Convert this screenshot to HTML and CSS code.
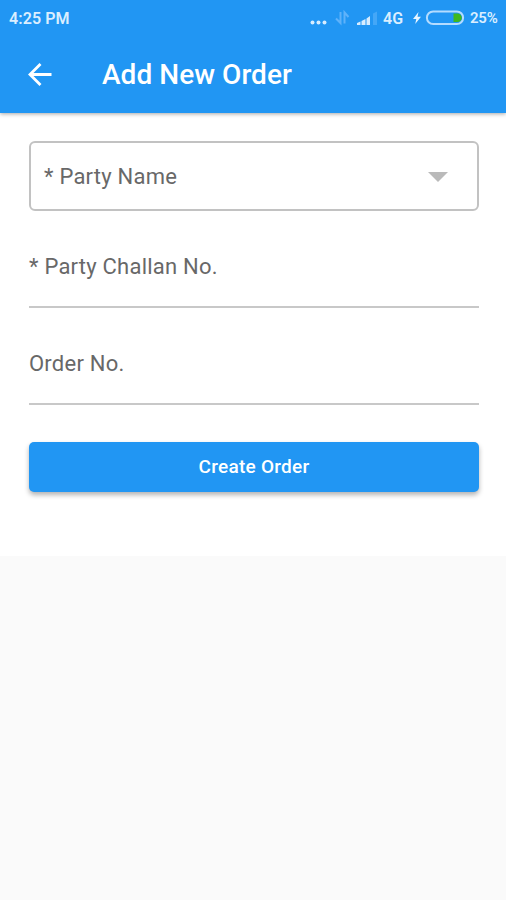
FILE: index.html
```html
<!DOCTYPE html>
<html lang="en">
<head>
<meta charset="utf-8">
<title>Add New Order</title>
<link rel="stylesheet" href="styles.css">
</head>
<body>
<header class="app-header">
  <div class="status-bar">
    <span class="clock">4:25 PM</span>
    <div class="status-icons">
      <svg class="network" width="68" height="20" viewBox="0 0 68 20">
        <g fill="#d6ecff"><circle cx="2.500" cy="14.600" r="2"/><circle cx="8.500" cy="14.600" r="2"/><circle cx="14.500" cy="14.600" r="2"/></g>
        <path d="M30.500 4V15L26 10.500M34.500 15.500V4.500L38.500 9" fill="none" stroke="#5fb2fa" stroke-width="2"/>
        <path d="M47 17V15L50.500 13.500V17ZM51.500 17V13L55.500 11V17ZM56.500 17V10.500L60 8V17Z" fill="#d6ecff"/>
        <path d="M63 17V5.500L67 3.500V17Z" fill="#44a7f7"/>
      </svg>
      <span class="carrier">4G</span>
      <svg class="battery" width="54" height="20" viewBox="0 0 54 20">
        <path d="M6.500 4L1 11H4.300L3.200 16L9 8.800H5.500Z" fill="#e8f5ff"/>
        <rect x="14.900" y="3.500" width="36.200" height="12.500" rx="6.250" fill="none" stroke="#b4dcff" stroke-width="2"/>
        <path d="M41.500 5.500H45.500A4.250 4.250 0 0 1 45.500 14H41.500Z" fill="#3fb81e"/>
      </svg>
      <span class="percent">25%</span>
    </div>
  </div>
  <div class="toolbar">
    <svg class="back" width="24" height="24" viewBox="0 0 24 24"><path d="M23.500 11.500H2M12.500 1L2 11.500L12.500 22" fill="none" stroke="#fff" stroke-width="2.800"/></svg>
    <h1 class="title">Add New Order</h1>
  </div>
</header>
<main class="form">
  <div class="select">
    <span class="label">* Party Name</span>
    <svg width="20" height="10" viewBox="0 0 20 10"><path d="M0 0H20L10 10Z" fill="#bababa"/></svg>
  </div>
  <div class="field"><span class="label">* Party Challan No.</span></div>
  <div class="field"><span class="label">Order No.</span></div>
  <button class="submit" type="button">Create Order</button>
</main>
</body>
</html>
```
FILE: styles.css
```css
* { box-sizing: border-box; }
body { margin: 0; min-height: 900px; background: #fafafa; font-family: Roboto, sans-serif; }
.app-header { position: relative; height: 113px; background: #2196f3; color: #fff; box-shadow: 0 1px 4px rgba(0,0,0,.35); }
.status-bar { display: flex; justify-content: space-between; align-items: center; height: 36px; padding: 0 8px 0 9px; color: #daeeff; font-size: 16px; font-weight: 600; }
.clock { letter-spacing: .1px; }
.status-icons { display: flex; align-items: center; }
.carrier { width: 21px; margin-left: 5px; }
.battery { margin-left: 8px; }
.percent { width: 28px; margin-left: 4px; font-size: 15px; letter-spacing: -.2px; }
.toolbar { display: flex; align-items: center; height: 77px; padding-left: 28px; }
.title { margin: 0 0 0 50px; font-size: 28px; font-weight: 500; line-height: 36px; letter-spacing: .05px; }
.form { height: 443px; padding: 28px 27px 0 29px; background: #fff; }
.select { display: flex; align-items: center; justify-content: space-between; height: 70px; padding: 2px 29px 0 13px; border: 2px solid #c2c2c2; border-radius: 6px; }
.label { color: #686868; font-size: 22px; line-height: 28px; letter-spacing: .23px; white-space: nowrap; }
.field { display: flex; height: 97px; padding-top: 42px; border-bottom: 2px solid #c8c8c8; }
.field + .field { padding-top: 42px; }
.submit { display: block; width: 450px; height: 50px; margin-top: 37px; padding: 0; border: 0; border-radius: 5px; background: #2196f3; color: #fff; font: 500 19px/50px Roboto, sans-serif; letter-spacing: .25px; text-align: center; box-shadow: 0 3px 5px rgba(0,0,0,.3); }
```
